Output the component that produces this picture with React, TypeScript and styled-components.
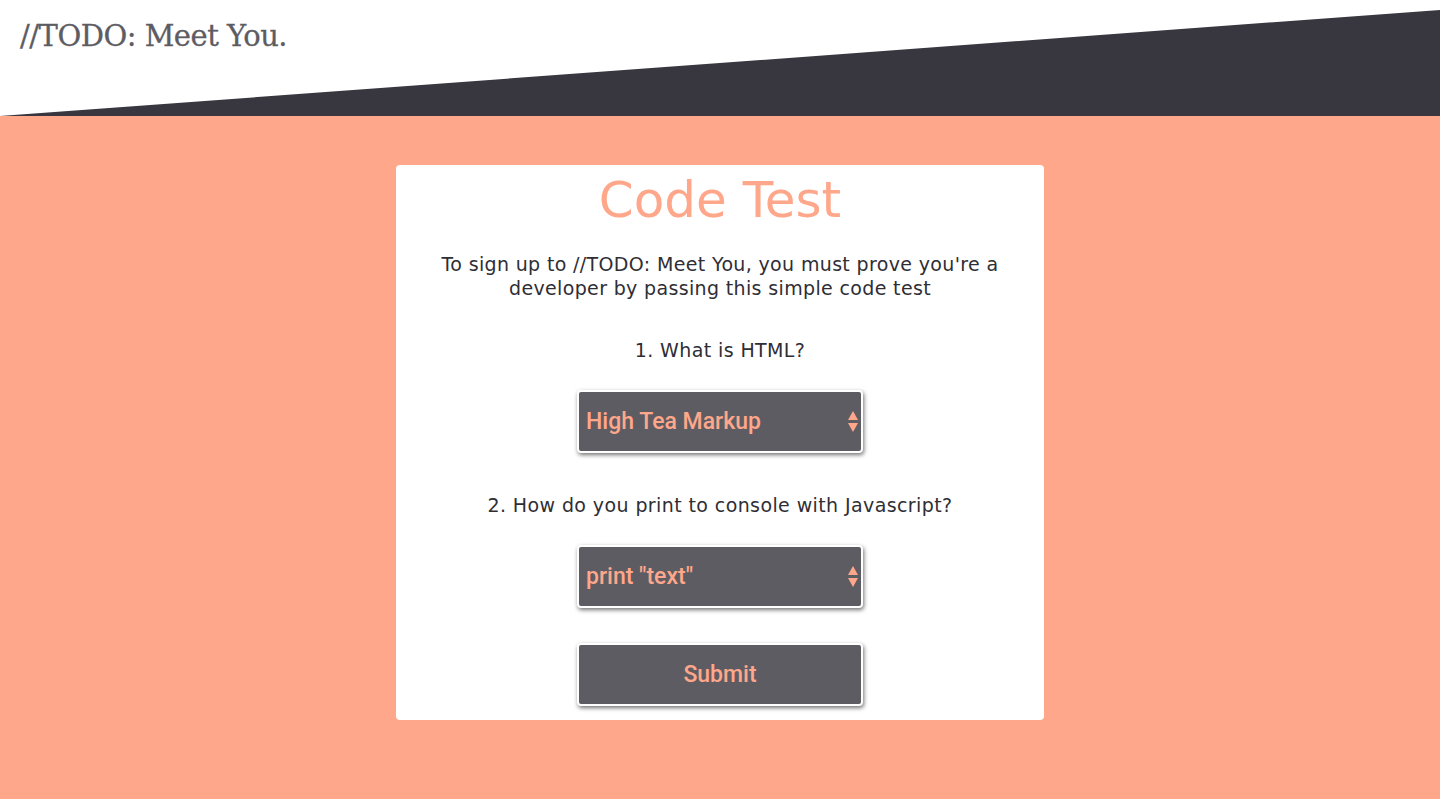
import React from "react";
import styled, { createGlobalStyle } from "styled-components";

const Global = createGlobalStyle`
  html, body { margin: 0; padding: 0; }
  body { background: #ffa78a; font-family: "DejaVu Sans", sans-serif; }
`;

const Page = styled.div`
  min-height: 799px;
  display: flex;
  flex-direction: column;
  background: #ffa78a;
`;

const Header = styled.header`
  position: relative;
  height: 116px;
  background: #ffffff;
  overflow: hidden;
`;

const Slant = styled.svg`
  position: absolute;
  left: 0;
  top: 0;
  width: 100%;
  height: 116px;
`;

const Brand = styled.h1`
  position: relative;
  margin: 0;
  padding: 16px 0 0 20px;
  font-family: "DejaVu Serif", serif;
  font-weight: 400;
  font-size: 29px;
  letter-spacing: -0.5px;
  color: #5d5c63;
  line-height: 40px;
  -webkit-text-stroke: 0.3px #5d5c63;
`;

const Main = styled.main`
  display: flex;
  justify-content: center;
  padding-top: 49px;
`;

const Card = styled.form`
  width: 648px;
  box-sizing: border-box;
  background: #fff;
  border-radius: 4px;
  padding: 6px 30px 14px;
  display: flex;
  flex-direction: column;
  align-items: center;
`;

const Title = styled.h2`
  margin: 0;
  font-family: "DejaVu Sans", sans-serif;
  font-weight: 400;
  font-size: 50px;
  line-height: 58px;
  color: #ffa78a;
`;

const Intro = styled.p`
  margin: 23px 0 0;
  font-size: 19px;
  letter-spacing: 0.35px;
  line-height: 24px;
  color: #2f2e35;
  text-align: center;
`;

const Question = styled.label<{ $gap: number }>`
  display: block;
  margin-top: ${(p) => p.$gap}px;
  font-size: 19px;
  letter-spacing: 0.4px;
  line-height: 24px;
  color: #2f2e35;
  text-align: center;
`;

const SelectWrap = styled.div`
  position: relative;
  margin-top: 28px;
  width: 286px;
  height: 63px;
`;

const Select = styled.select`
  appearance: none;
  -webkit-appearance: none;
  width: 100%;
  height: 100%;
  box-sizing: border-box;
  border: 2px solid #fff;
  border-radius: 4px;
  background: #5e5c63;
  box-shadow: 1px 2px 4px rgba(0, 0, 0, 0.55);
  color: #ffa78a;
  font-family: Roboto, "Liberation Sans", Arial, sans-serif;
  font-weight: 500;
  font-size: 23px;
  padding: 0 30px 0 7px;
  outline: none;
`;

const Arrows = styled.svg`
  position: absolute;
  right: 5px;
  top: 21px;
  width: 10px;
  height: 22px;
  pointer-events: none;
`;

const Button = styled.button`
  margin-top: 35px;
  width: 286px;
  height: 63px;
  box-sizing: border-box;
  border: 2px solid #fff;
  border-radius: 4px;
  background: #5e5c63;
  box-shadow: 1px 2px 4px rgba(0, 0, 0, 0.55);
  color: #ffa78a;
  font-family: Roboto, "Liberation Sans", Arial, sans-serif;
  font-weight: 500;
  font-size: 23px;
  cursor: pointer;
`;

const ArrowIcon = () => (
  <Arrows viewBox="0 0 10 22">
    <polygon points="5,0 10,9 0,9" fill="#ffa78a" />
    <polygon points="0,12 10,12 5,21" fill="#ffa78a" />
  </Arrows>
);

export default function App() {
  return (
    <Page>
      <Global />
      <Header>
        <Slant viewBox="0 0 1440 116" preserveAspectRatio="none">
          <polygon points="0,116 1440,10 1440,116" fill="#38363f" />
        </Slant>
        <Brand>//TODO: Meet You.</Brand>
      </Header>
      <Main>
        <Card onSubmit={(e) => e.preventDefault()}>
          <Title>Code Test</Title>
          <Intro>
            To sign up to //TODO: Meet You, you must prove you're a
            <br />
            developer by passing this simple code test
          </Intro>
          <Question $gap={38}>1. What is HTML?</Question>
          <SelectWrap>
            <Select defaultValue="a">
              <option value="a">High Tea Markup</option>
              <option value="b">HyperText Markup Language</option>
              <option value="c">Hot Tamale Meat Loaf</option>
            </Select>
            <ArrowIcon />
          </SelectWrap>
          <Question $gap={40}>
            2. How do you print to console with Javascript?
          </Question>
          <SelectWrap>
            <Select defaultValue="a">
              <option value="a">print "text"</option>
              <option value="b">console.log("text")</option>
              <option value="c">echo "text"</option>
            </Select>
            <ArrowIcon />
          </SelectWrap>
          <Button type="submit">Submit</Button>
        </Card>
      </Main>
    </Page>
  );
}
